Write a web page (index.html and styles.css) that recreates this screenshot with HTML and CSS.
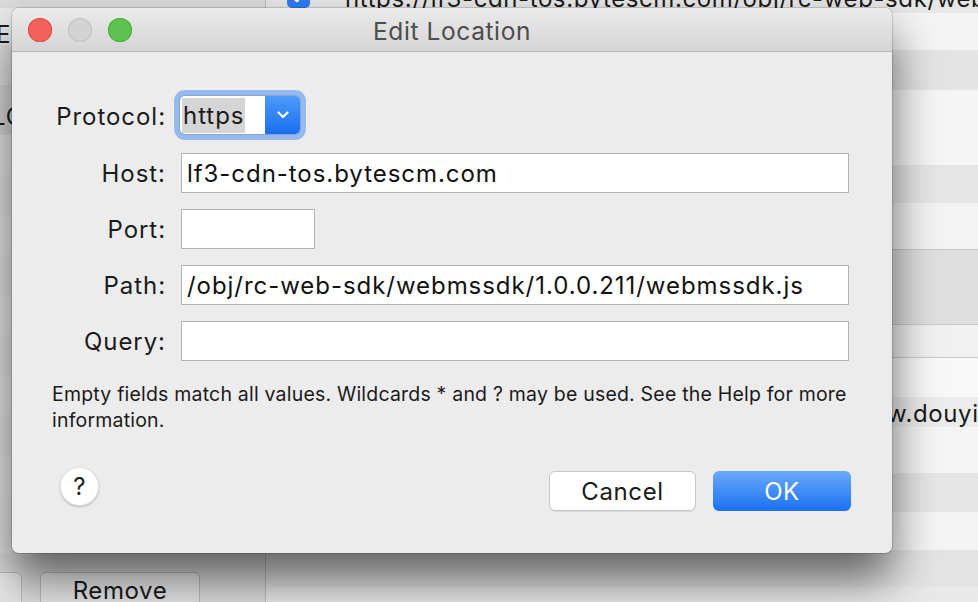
FILE: index.html
```html
<!DOCTYPE html>
<html>
<head>
<meta charset="utf-8">
<title>Edit Location</title>
<link rel="stylesheet" href="styles.css">
</head>
<body>
<div class="app">
  <aside class="sidebar">
    <div class="side-list">
      <div class="side-row s-top"></div>
      <div class="side-row s-a"><span class="side-text e-text">En</span></div>
      <div class="side-row s-b"></div>
      <div class="side-row s-c"><span class="side-text lc-text">LC</span></div>
      <div class="side-row s-d"></div>
      <div class="side-row s-b"></div>
      <div class="side-row s-d"></div>
      <div class="side-row s-b"></div>
      <div class="side-row s-d"></div>
      <div class="side-row s-b"></div>
      <div class="side-row s-d"></div>
      <div class="side-row s-b"></div>
      <div class="side-row s-d"></div>
    </div>
    <div class="side-bar">
      <button class="bg-btn add-btn"></button>
      <button class="bg-btn remove-btn">Remove</button>
    </div>
  </aside>
  <main class="main">
    <div class="row row-top">
      <span class="cb"><svg width="23" height="23" viewBox="0 0 23 23"><polyline points="6,12 10,16 17,7" fill="none" stroke="#fff" stroke-width="2.6" stroke-linecap="round" stroke-linejoin="round"/></svg></span>
      <span class="url">https://lf3-cdn-tos.bytescm.com/obj/rc-web-sdk/webmssdk/1.0.0.211/webmssdk.js</span>
    </div>
    <div class="row r1"></div>
    <div class="row r2"></div>
    <div class="row r3"></div>
    <div class="row r4"></div>
    <div class="row r5"></div>
    <div class="row r6"></div>
    <div class="row r7"></div>
    <div class="row r8"></div>
    <div class="row r9"><span class="url2">w.douyin.com/</span></div>
    <div class="row r10"></div>
    <div class="row r11"></div>
    <div class="row r12"></div>
    <div class="row r13"></div>
    <div class="row r14"></div>
  </main>
</div>

<div class="dialog">
  <div class="titlebar">
    <div class="lights">
      <span class="light red"></span>
      <span class="light grey"></span>
      <span class="light green"></span>
    </div>
    <div class="title">Edit Location</div>
    <div></div>
  </div>
  <div class="dialog-body">
    <div class="form">
      <label class="lbl">Protocol:</label>
      <div class="proto-cell">
        <div class="select">
          <span class="sel-val"><span class="sel-hl">https</span></span>
          <span class="sel-btn"><svg width="12" height="8" viewBox="0 0 12 8"><polyline points="1.5,1.5 6,6 10.5,1.5" fill="none" stroke="#fff" stroke-width="2.2" stroke-linecap="round" stroke-linejoin="round"/></svg></span>
        </div>
      </div>
      <label class="lbl">Host:</label>
      <div class="field">lf3-cdn-tos.bytescm.com</div>
      <label class="lbl">Port:</label>
      <div class="field port"></div>
      <label class="lbl">Path:</label>
      <div class="field">/obj/rc-web-sdk/webmssdk/1.0.0.211/webmssdk.js</div>
      <label class="lbl">Query:</label>
      <div class="field"></div>
    </div>
    <p class="note">Empty fields match all values. Wildcards * and ? may be used. See the Help for more information.</p>
    <div class="actions">
      <button class="help">?</button>
      <div class="spacer"></div>
      <button class="btn cancel">Cancel</button>
      <button class="btn ok">OK</button>
    </div>
  </div>
</div>
</body>
</html>
```

FILE: styles.css
```css
* { box-sizing: border-box; margin: 0; padding: 0; }
html, body { width: 978px; height: 602px; overflow: hidden; }
body {
  position: relative;
  font-family: "Inter", "Liberation Sans", sans-serif;
  font-size: 24px;
  letter-spacing: 0.95px;
  color: #1b1b1b;
  background: #e6e6e6;
}
button { font: inherit; letter-spacing: inherit; color: inherit; }

/* background window */
.app { display: flex; height: 602px; }
.sidebar {
  width: 266px;
  flex: none;
  border-right: 1px solid #bdbdbd;
  display: flex;
  flex-direction: column;
  background: #e4e4e4;
}
.side-list { flex: 1; display: flex; flex-direction: column; overflow: hidden; }
.side-row { flex: none; display: flex; align-items: center; white-space: nowrap; overflow: hidden; }
.side-text { color: #1a1a1a; }
.e-text { margin-left: -4px; margin-top: 16px; }
.lc-text { margin-left: -8px; margin-top: 12px; }
.s-top { height: 8px; background: #dcdcdc; }
.s-a { height: 37px; background: #ebebeb; }
.s-b { height: 40px; background: #e3e3e3; }
.s-c { height: 50px; background: #d9d9d9; }
.s-d { height: 40px; background: #e8e8e8; }
.side-bar {
  height: 49px;
  flex: none;
  background: #dedede;
  display: flex;
  align-items: flex-start;
  gap: 18px;
  padding-top: 19px;
}
.bg-btn {
  height: 40px;
  border: 1px solid #bcbcbc;
  border-radius: 6px;
  background: linear-gradient(#f0f0f0, #e2e2e2);
  color: #1a1a1a;
  letter-spacing: 0.6px;
}
.add-btn { width: 22px; border-left: none; border-radius: 0 6px 6px 0; }
.remove-btn { width: 160px; padding-bottom: 4px; }

.main { flex: 1; display: flex; flex-direction: column; overflow: hidden; }
.row { flex: none; display: flex; white-space: nowrap; }
.row-top {
  height: 13px;
  background: #e7e7e7;
  align-items: flex-end;
  padding-left: 21px;
  overflow: visible;
}
.cb {
  width: 23px;
  height: 23px;
  border-radius: 5px;
  background: #2f7bf5;
  margin-bottom: 5px;
  display: flex;
}
.url { margin-left: 35px; line-height: 24px; margin-bottom: 2px; color: #1a1a1a; letter-spacing: 0.6px; }
.r1 { height: 37px; background: #f4f4f4; }
.r2 { height: 40px; background: #e4e4e4; }
.r3 { height: 75px; background: #f5f5f5; }
.r4 { height: 38px; background: #e6e6e6; }
.r5 { height: 47px; background: #f3f3f3; border-bottom: 1px solid #c9c9c9; }
.r6 { height: 75px; background: #dfdfdf; border-bottom: 1px solid #c9c9c9; }
.r7 { height: 33px; background: #f1f1f1; border-bottom: 1px solid #c9c9c9; }
.r8 { height: 39px; background: #f8f8f8; }
.r9 { height: 30px; background: #ececec; align-items: center; padding-left: 621px; }
.url2 { color: #1a1a1a; margin-top: 2px; letter-spacing: 0.6px; }
.r10 { height: 46px; background: #f5f5f5; }
.r11 { height: 39px; background: #e6e6e6; }
.r12 { height: 38px; background: #f4f4f4; }
.r13 { height: 37px; background: #e4e4e4; }
.r14 { height: 20px; background: #e9e9e9; }

/* dialog */
.dialog {
  position: absolute;
  left: 12px;
  top: 8px;
  width: 880px;
  height: 545px;
  border-radius: 7px;
  background: #ececec;
  overflow: hidden;
  box-shadow: 0 0 0 1px rgba(0,0,0,0.14), 0 26px 46px rgba(0,0,0,0.58);
}
.titlebar {
  height: 44px;
  display: grid;
  grid-template-columns: 1fr auto 1fr;
  align-items: center;
  background: linear-gradient(#ebebeb, #d5d5d5);
  border-bottom: 1px solid #b7b7b7;
}
.lights { display: flex; gap: 16px; padding-left: 16px; }
.light { width: 24px; height: 24px; border-radius: 50%; }
.red { background: #f2615a; box-shadow: inset 0 0 0 1px #de4d45; }
.grey { background: #d2d2d2; box-shadow: inset 0 0 0 1px #c0c0c0; }
.green { background: #5dc24f; box-shadow: inset 0 0 0 1px #4aac3d; }
.title { color: #4d4d4d; font-size: 24.5px; padding-top: 2px; letter-spacing: 0.6px; }

.form {
  display: grid;
  grid-template-columns: 154px 1fr;
  grid-template-rows: 41px repeat(4, 40px);
  column-gap: 15px;
  row-gap: 16px;
  padding: 44px 43px 0 0;
}
.lbl { align-self: center; text-align: right; color: #1b1b1b; }
.proto-cell { display: flex; align-items: flex-start; margin-left: -1px; }
.select {
  width: 120px;
  height: 38px;
  display: flex;
  background: #fff;
  border-radius: 5px;
  box-shadow: 0 0 0 1px rgba(0,0,0,0.12), 0 0 0 6px rgba(64,136,240,0.5);
}
.sel-val { flex: 1; display: flex; align-items: center; padding-left: 2px; }
.sel-hl { background: #d5d5d5; height: 35px; display: flex; align-items: center; padding: 0 1px 0 1px; }
.sel-btn {
  width: 35px;
  border-radius: 0 5px 5px 0;
  background: linear-gradient(#4c9bfa, #1a6ef0);
  display: flex;
  align-items: center;
  justify-content: center;
}
.field {
  height: 40px;
  background: #fff;
  border: 1px solid #b3b3b3;
  padding-left: 5px;
  display: flex;
  align-items: center;
  color: #111;
  white-space: nowrap;
}
.field.port { width: 134px; }

.note {
  margin-top: 20px;
  padding: 0 36px 0 40px;
  font-size: 19.5px;
  line-height: 26px;
  letter-spacing: 0.2px;
  color: #1a1a1a;
}
.actions {
  display: flex;
  align-items: flex-start;
  margin-top: 38px;
  padding: 0 41px 0 48px;
}
.spacer { flex: 1; }
.help {
  width: 39px;
  height: 39px;
  margin-top: -4px;
  border-radius: 50%;
  background: #fff;
  border: 1px solid rgba(0,0,0,0.1);
  box-shadow: 0 1px 2px rgba(0,0,0,0.25);
  font-size: 24px;
  letter-spacing: 0;
  color: #222;
  display: flex;
  align-items: center;
  justify-content: center;
}
.btn {
  height: 40px;
  border-radius: 6px;
  display: flex;
  align-items: center;
  justify-content: center;
  letter-spacing: 0.6px;
}
.cancel {
  width: 147px;
  background: #fff;
  border: 1px solid #c6c6c6;
  box-shadow: 0 1px 1px rgba(0,0,0,0.08);
  color: #1a1a1a;
}
.ok {
  width: 138px;
  margin-left: 17px;
  border: none;
  background: linear-gradient(#69a9fb, #1b71f3);
  color: #fff;
}
```
